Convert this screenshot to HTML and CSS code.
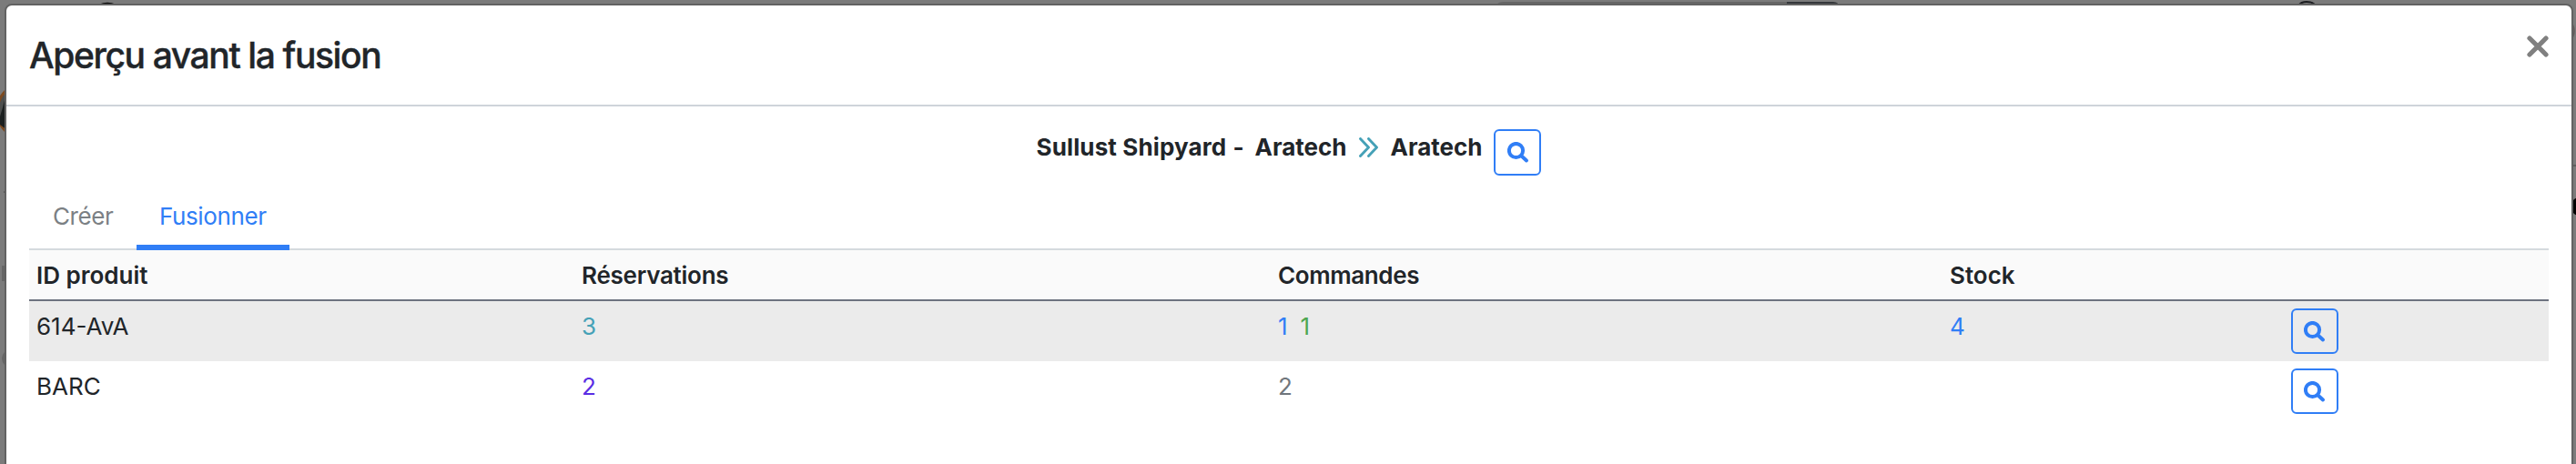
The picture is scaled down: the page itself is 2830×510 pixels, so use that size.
FILE: index.html
```
<!DOCTYPE html>
<html lang="fr">
<head>
<meta charset="utf-8">
<title>Aperçu avant la fusion</title>
<link rel="stylesheet" href="styles.css">
</head>
<body>
<svg class="backdrop" width="2830" height="510" viewBox="0 0 2830 510" aria-hidden="true">
  <circle cx="118" cy="26" r="22" fill="none" stroke="#000" stroke-width="2.5"/>
  <path d="M1643 6Q1646 2 1652 2H1963V10H1643Z" fill="#666"/>
  <path d="M1963 2H2014Q2020 2 2021 8H1963Z" fill="#34373b"/>
  <path d="M2525 6Q2528 2 2534 2Q2541 2 2544 6" fill="none" stroke="#1b1d20" stroke-width="2"/>
  <circle cx="28" cy="122" r="31" fill="#4d4f4e" stroke="#7d4a20" stroke-width="3"/>
  <path d="M10 105L5 110L3 118L0 128V137L8 143H12V105Z" fill="#1c2020"/>
  <path d="M4 211L9 207V216Z" fill="#333"/>
  <path d="M2 292H8V309H2Z" fill="#666"/>
  <circle cx="12" cy="394" r="8" fill="none" stroke="#666" stroke-width="4"/>
  <circle cx="2814" cy="34" r="14" fill="none" stroke="#625a5a" stroke-width="1.5"/>
  <path d="M2824 182H2830" stroke="#555" stroke-width="1.5"/>
  <circle cx="2834" cy="227" r="10" fill="#000"/>
</svg>
<svg class="sprite" aria-hidden="true">
  <symbol id="search" viewBox="0 0 24 24">
    <circle cx="9.5" cy="9.5" r="7.6"/>
    <path d="M15.6 15.6L21 20.4"/>
  </symbol>
</svg>
<div class="modal">
  <header class="modal-header">
    <h1 class="modal-title">Aperçu avant la fusion</h1>
    <button class="close" aria-label="Fermer"><svg class="close-icon" viewBox="0 0 24 24"><path d="M3 3L21 21M21 3L3 21"/></svg></button>
  </header>
  <main class="modal-body">
    <div class="merge">
      <span class="shipyard">Sullust Shipyard</span>
      <span class="dash">-</span>
      <span class="source">Aratech</span>
      <svg class="chevrons" viewBox="0 0 22 22"><path d="M1.5 1.5L10.5 11L1.5 20.5M10.5 1.5L19.5 11L10.5 20.5"/></svg>
      <span class="target">Aratech</span>
      <button class="btn btn-merge" aria-label="Voir"><svg class="search"><use href="#search"/></svg></button>
    </div>
    <nav class="tabs">
      <a class="tab">Créer</a>
      <a class="tab active">Fusionner</a>
    </nav>
    <table class="products">
      <colgroup><col class="c-id"><col class="c-res"><col class="c-ord"><col class="c-stock"><col></colgroup>
      <thead>
        <tr><th>ID produit</th><th class="th-res">Réservations</th><th class="th-ord">Commandes</th><th>Stock</th><th></th></tr>
      </thead>
      <tbody>
        <tr class="striped">
          <td>614-AvA</td><td><span class="info">3</span></td>
          <td><span class="primary">1</span><span class="success">1</span></td>
          <td><span class="primary">4</span></td>
          <td><button class="btn" aria-label="Voir"><svg class="search"><use href="#search"/></svg></button></td>
        </tr>
        <tr>
          <td>BARC</td><td><span class="indigo">2</span></td>
          <td><span class="muted">2</span></td>
          <td></td>
          <td><button class="btn" aria-label="Voir"><svg class="search"><use href="#search"/></svg></button></td>
        </tr>
      </tbody>
    </table>
  </main>
</div>
</body>
</html>
```
FILE: styles.css
```
* { box-sizing: border-box; }
body {
  margin: 0;
  height: 510px;
  overflow: hidden;
  padding: 4px 3px 0 5px;
  background: #7b7b7b;
  color: #212529;
  font: 26px/39px Inter, "Liberation Sans", sans-serif;
}
.backdrop { position: absolute; left: 0; top: 0; }
.sprite { position: absolute; width: 0; height: 0; }
.modal {
  position: relative;
  height: 520px;
  border: 2px solid #626262;
  border-radius: 8px;
  background: #fff;
}
.modal-header {
  display: flex;
  justify-content: space-between;
  align-items: flex-start;
  height: 111px;
  padding: 25px 25px 0;
  border-bottom: 2px solid #ced4da;
}
.modal-title {
  margin: 0;
  font-size: 39px;
  font-weight: 500;
  line-height: 59px;
  letter-spacing: -1.39px;
  -webkit-text-stroke: .4px #212529;
}
.close {
  display: flex;
  margin-top: 8px;
  padding: 0;
  border: 0;
  background: none;
}
.close-icon {
  width: 24px;
  height: 24px;
  stroke: #808080;
  stroke-width: 5.2;
  stroke-linecap: round;
}
.modal-body { padding: 25px 25px 0; }
.merge {
  display: flex;
  justify-content: center;
  align-items: flex-start;
  height: 60px;
  padding-right: 1px;
  font-weight: 700;
  white-space: nowrap;
}
.shipyard { width: 216px; letter-spacing: .13px; }
.dash { width: 24px; }
.source { width: 114px; }
.chevrons {
  width: 22px;
  height: 22px;
  margin: 9px 13px 0 0;
  fill: none;
  stroke: #45a1b7;
  stroke-width: 2.9;
  stroke-linecap: round;
  stroke-linejoin: round;
}
.target { width: 113px; }
.btn {
  display: flex;
  width: 52px;
  height: 50px;
  padding: 12px 0 0 12px;
  border: 2px solid #307ef6;
  border-radius: 6px;
  background: none;
}
.btn-merge { height: 51px; margin: 0; padding-left: 13px; }
.search {
  width: 24px;
  height: 24px;
  fill: none;
  stroke: #307ef6;
  stroke-width: 4;
  stroke-linecap: round;
}
.tabs {
  display: flex;
  height: 73px;
  border-bottom: 2px solid #d5dade;
}
.tab {
  height: 73px;
  padding: 16px 0 0 26px;
  color: #7b8084;
  letter-spacing: -.4px;
}
.tab:first-child { width: 118px; }
.tab.active {
  width: 168px;
  padding-left: 25px;
  border-bottom: 6px solid #307ef6;
  color: #307ef6;
}
.products {
  width: 2768px;
  table-layout: fixed;
  border-collapse: separate;
  border-spacing: 0;
}
.c-id { width: 599px; }
.c-res { width: 765px; }
.c-ord { width: 738px; }
.c-stock { width: 375px; }
.products th,
.products td {
  padding: 8px 8px 7px;
  text-align: left;
  vertical-align: top;
}
.products th {
  height: 56px;
  border-bottom: 2px solid #6d7380;
  background: #fafafa;
  font-weight: 600;
}
.products td { height: 66px; padding-bottom: 8px; }
.products .th-res { letter-spacing: -.25px; }
.products .th-ord { letter-spacing: -.38px; }
.striped td { background: #ebebeb; }
.info { color: #45a1b7; }
.primary { color: #307ef6; }
.success { margin-left: 14px; color: #4ea64f; }
.indigo { color: #5a2de4; }
.muted { color: #70767c; }
```
